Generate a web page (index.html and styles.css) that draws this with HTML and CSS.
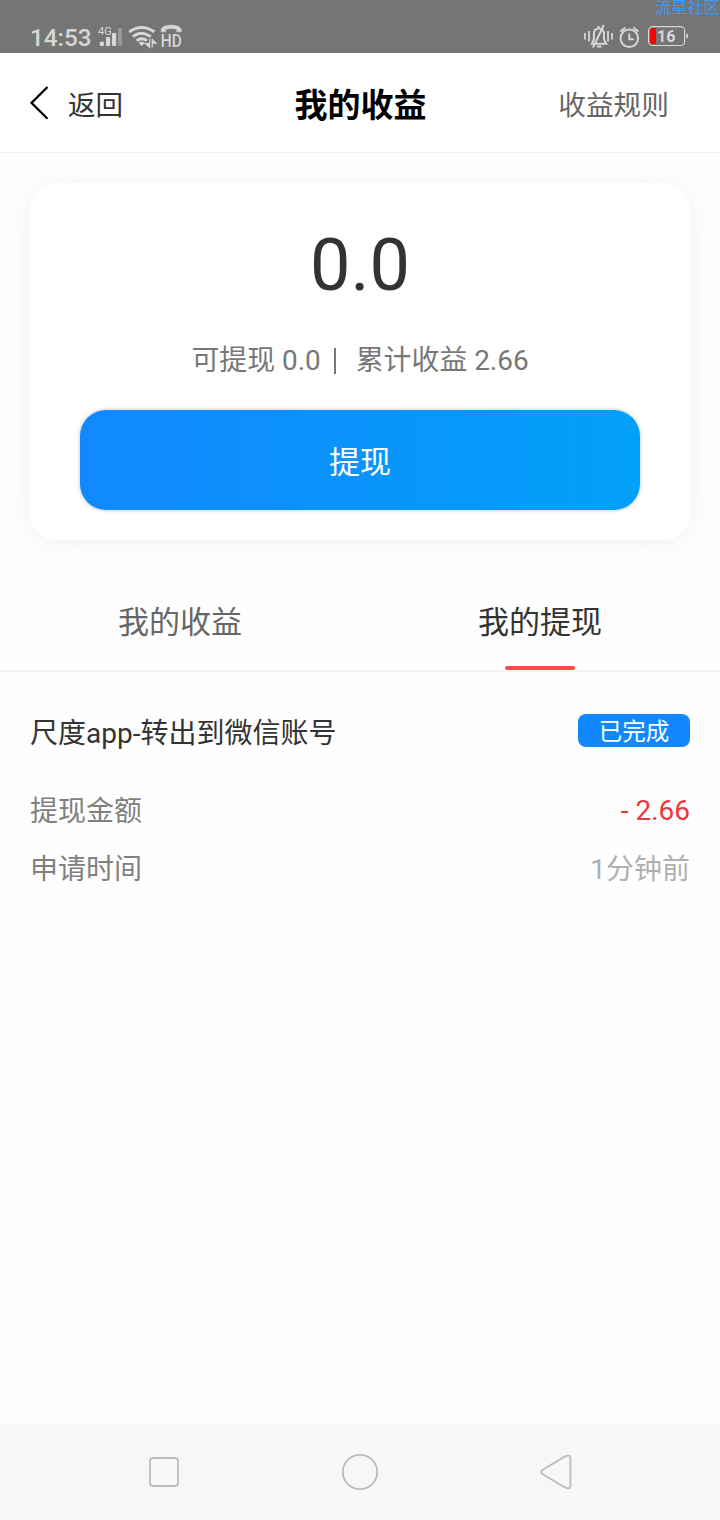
FILE: index.html
```html
<!DOCTYPE html>
<html lang="zh-CN">
<head>
<meta charset="utf-8">
<title>我的收益</title>
<link rel="stylesheet" href="styles.css">
</head>
<body>
<div class="screen">
  <div class="status">
    <span class="clock">14:53</span>
    <svg class="status-left" width="90" height="28" viewBox="96 23 90 28">
      <text class="net" x="98" y="35">4G</text>
      <g fill="#d6d6d6">
        <rect x="99.8" y="41.5" width="4.2" height="4.5" rx="1.5"/>
        <rect x="106" y="37" width="4.2" height="9" rx="1"/>
        <rect x="112" y="33" width="4.2" height="13" rx="1"/>
      </g>
      <rect x="118" y="28" width="4" height="18" rx="1" fill="#989898"/>
      <g fill="none" stroke="#d6d6d6" stroke-width="2.8">
        <path d="M129.2 32Q141.7 23 154.4 32"/>
        <path d="M132.8 36.6Q141.7 29.8 150.7 36.6"/>
        <path d="M136.6 40.6Q141.7 36.8 146.8 40.6"/>
      </g>
      <path d="M138.6 43Q141.7 40.6 144.8 43L141.7 46Z" fill="#d6d6d6"/>
      <path d="M149.6 39V47.4L145.4 43.6H149M152.2 47.4V39.4L156 43.2H152" fill="#d6d6d6" stroke="#d6d6d6" stroke-width="1.2"/>
      <path d="M161.2 31.8V29.6C162 27 165 25.2 171.2 25.2S180.6 27 181.3 29.6V31.8H176.8V29.3C173 28.3 169.5 28.3 165.7 29.3V31.8Z" fill="#d6d6d6" stroke="#d6d6d6" stroke-width=".6"/>
      <text class="hd" x="160.7" y="47" textLength="21" lengthAdjust="spacingAndGlyphs">HD</text>
    </svg>
    <svg class="status-right" width="108" height="28" viewBox="582 23 108 28">
      <g fill="none" stroke="#d6d6d6" stroke-width="2">
        <path d="M585 33V39.5M589 31V41.5M608 31V41.5M612 33V39.5" stroke-width="1.8"/>
        <path d="M598.6 28.4C595.2 28.4 593.9 31 593.9 34V39.5L591.8 43.8H606.2L604 39.5V34C604 31 602.2 28.4 598.6 28.4Z"/>
        <path d="M603.8 25L593 47.6M597 46.6H601.4M598.6 26V28.6"/>
        <circle cx="629.3" cy="38.2" r="8.8"/>
        <path d="M629.3 33.5V39.3H633.8M620.3 31.6L625.4 27.4M638.5 31.6L633.4 27.4"/>
        <rect x="648.6" y="26.7" width="36" height="18.8" rx="4" stroke-width="1.2"/>
      </g>
      <path d="M656 28V44H653Q650 44 650 41V31Q650 28 653 28Z" fill="#f00"/>
      <rect x="686.3" y="34" width="1.6" height="4.2" fill="#d6d6d6"/>
      <text class="level" x="657" y="42.2">16</text>
    </svg>
    <span class="watermark">流星社区</span>
  </div>

  <header class="nav">
    <div class="back">
      <svg width="20" height="36" viewBox="0 0 20 36"><path d="M17.5 2L1.5 17.9L17.5 33.8" fill="none" stroke="#000" stroke-width="2.2"/></svg>
      <span class="label">返回</span>
    </div>
    <h1 class="title">我的收益</h1>
    <span class="rules">收益规则</span>
  </header>

  <section class="card">
    <div class="balance">0.0</div>
    <div class="summary"><span>可提现 0.0</span><i class="divider"></i><span>累计收益 2.66</span></div>
    <div class="withdraw">提现</div>
  </section>

  <nav class="tabs">
    <div class="tab">我的收益</div>
    <div class="tab active">我的提现</div>
  </nav>

  <main class="record">
    <div class="row head"><span>尺度app-转出到微信账号</span><span class="badge">已完成</span></div>
    <div class="row"><span>提现金额</span><span class="amount">- 2.66</span></div>
    <div class="row"><span>申请时间</span><span class="time">1分钟前</span></div>
  </main>

  <footer class="keys">
    <svg width="40" height="40" viewBox="0 0 40 40"><rect x="6" y="6" width="28" height="28" rx="3"/></svg>
    <svg width="40" height="40" viewBox="0 0 40 40"><circle cx="20" cy="20" r="17.2"/></svg>
    <svg width="40" height="40" viewBox="0 0 40 40"><path d="M7.2 17.4L29 4.4Q34.4 2.2 34.4 6V33.5Q34.4 37.8 29 35.4L7.2 22.4Q3.2 20 7.2 17.4Z"/></svg>
  </footer>
</div>
</body>
</html>
```
FILE: styles.css
```css
* { box-sizing: border-box; }
body {
  margin: 0;
  background: #fefefe;
  font-family: Roboto, "Noto Sans CJK SC", sans-serif;
  color: #333;
}
.screen {
  width: 720px;
  height: 1520px;
  display: flex;
  flex-direction: column;
  overflow: hidden;
}
.status {
  position: relative;
  height: 53px;
  flex: none;
  padding: 23px 30px 0;
  display: flex;
  align-items: flex-start;
  background: #757575;
  overflow: hidden;
}
.clock {
  width: 66px;
  font-size: 24.3px;
  line-height: 30px;
  font-weight: 500;
  color: #d6d6d6;
  white-space: nowrap;
}
.status-right { margin-left: auto; }
.net { font-size: 11px; fill: #d6d6d6; }
.hd { font-size: 18.5px; font-weight: 500; fill: #d6d6d6; }
.level { font-size: 16px; font-weight: 700; fill: #d6d6d6; }
.watermark {
  position: absolute;
  left: 655px;
  top: -1px;
  font-size: 16.2px;
  line-height: 18px;
  color: #3b98f5;
  white-space: nowrap;
}
.nav {
  height: 100px;
  flex: none;
  display: grid;
  grid-template-columns: 1fr auto 1fr;
  align-items: center;
  padding: 0 51px 0 30px;
  border-bottom: 1px solid #f1f1f1;
  background: #fff;
}
.back {
  display: flex;
  align-items: center;
  gap: 18px;
  font-size: 27.5px;
  line-height: 40px;
}
.label { padding-top: 6px; }
.title {
  margin: 0 0 0 22px;
  padding-top: 6px;
  font-size: 33px;
  line-height: 46px;
  font-weight: 700;
  color: #000;
}
.rules {
  justify-self: end;
  padding-top: 6px;
  font-size: 27.7px;
  line-height: 40px;
  color: #666;
}
.card {
  height: 357px;
  flex: none;
  margin: 30px 30px 0;
  padding: 38px 50px 0;
  border-radius: 26px;
  background: #fff;
  box-shadow: 0 2px 30px rgba(0, 0, 0, .06);
}
.balance {
  font-size: 72px;
  line-height: 90px;
  text-align: center;
}
.summary {
  display: flex;
  justify-content: center;
  align-items: center;
  margin-top: 30px;
  font-size: 27.9px;
  line-height: 40px;
  color: #777;
}
.divider {
  width: 2px;
  height: 26px;
  margin: 0 20px 0 13px;
  background: #777;
}
.withdraw {
  height: 100px;
  margin-top: 29px;
  border-radius: 26px;
  background: linear-gradient(90deg, #1288ff, #02a0f8);
  box-shadow: 0 0 4px rgba(0, 0, 0, .25);
  color: #fff;
  font-size: 31px;
  line-height: 105px;
  text-align: center;
}
.tabs {
  display: flex;
  flex: none;
  height: 132px;
  border-bottom: 2px solid #f4f4f4;
}
.tab {
  flex: 1;
  padding-top: 61px;
  display: flex;
  flex-direction: column;
  align-items: center;
  font-size: 31px;
  line-height: 44px;
  color: #666;
}
.tab.active { color: #333; }
.tab.active::after {
  content: "";
  width: 70px;
  height: 4px;
  margin-top: auto;
  border-radius: 2px;
  background: #ff4b47;
}
.record {
  flex: 1;
  padding: 33px 30px 0;
}
.row {
  display: flex;
  align-items: center;
  justify-content: space-between;
  height: 58px;
  font-size: 28px;
  line-height: 40px;
  color: #808080;
}
.row.head {
  margin-bottom: 20px;
  color: #333;
}
.badge {
  width: 112px;
  height: 33px;
  margin-bottom: 7px;
  border-radius: 8px;
  background: #1288ff;
  color: #fff;
  font-size: 23.5px;
  line-height: 37px;
  text-align: center;
}
.amount { margin-bottom: 2px; color: #f03538; }
.time { color: #b0b0b0; }
.keys {
  height: 96px;
  flex: none;
  display: flex;
  align-items: center;
  justify-content: space-between;
  padding: 0 144px;
  background: #f7f7f7;
}
.keys svg {
  fill: none;
  stroke: #bcbcbc;
  stroke-width: 1.8;
}
```
